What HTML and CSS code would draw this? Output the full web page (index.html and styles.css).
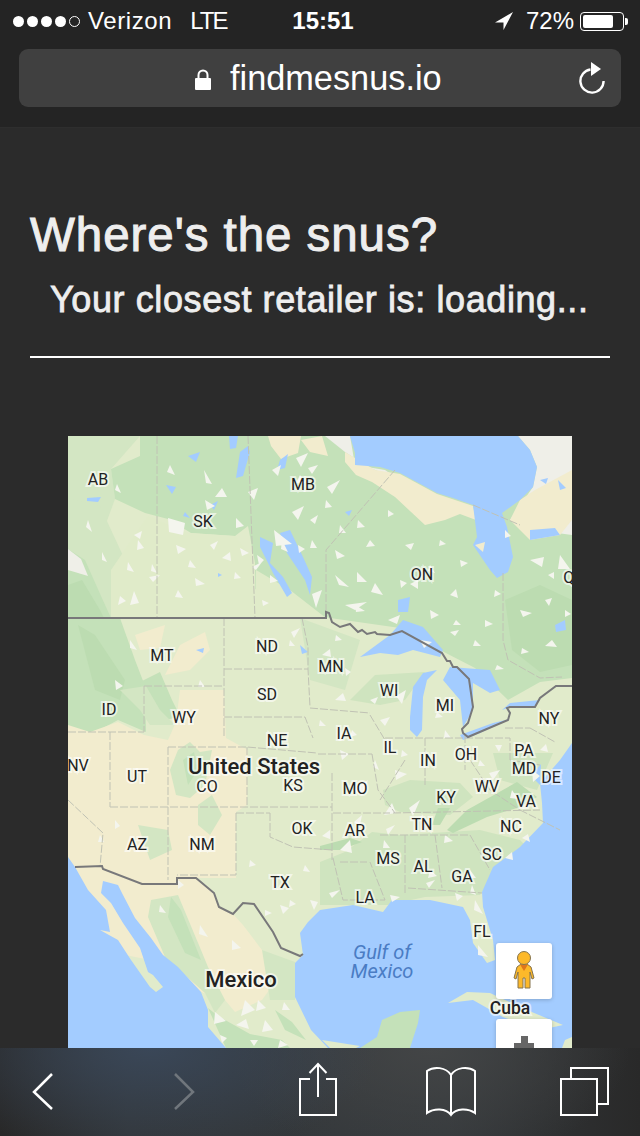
FILE: index.html
```html
<!DOCTYPE html>
<html lang="en">
<head>
  <meta charset="UTF-8">
  <meta name="viewport" content="width=device-width, initial-scale=1.0">
  <title>Where's the snus?</title>
  <link rel="stylesheet" href="styles.css">
</head>
<body>
  <!-- Safari chrome, top -->
  <header class="browser-top">
    <div class="status-bar">
      <div class="status-left">
        <span class="signal">
          <i class="dot"></i><i class="dot"></i><i class="dot"></i><i class="dot"></i><i class="dot empty"></i>
        </span>
        <span class="carrier">Verizon</span>
        <span class="network">LTE</span>
      </div>
      <div class="clock">15:51</div>
      <div class="status-right">
        <svg class="location" viewBox="0 0 18 18"><path d="M18 0L0 10.5h8.5V18z"/></svg>
        <span class="percent">72%</span>
        <span class="battery"><span class="battery-fill"></span></span>
        <span class="battery-nub"></span>
      </div>
    </div>
    <div class="url-bar">
      <svg class="lock" viewBox="0 0 16 21"><path d="M3.5 10V6a4.5 4.5 0 0 1 9 0v4" fill="none" stroke="#fff" stroke-width="2"/><rect y="9" width="16" height="12" rx="1" fill="#fff"/></svg>
      <span class="url-text">findmesnus.io</span>
      <svg class="reload" viewBox="0 0 28 32"><path d="M12.5 7.500A11.600 11.600 0 1 0 25.600 19" fill="none" stroke="#fff" stroke-width="2.400"/><path d="M13 0l10 7L13 14z" fill="#fff"/></svg>
    </div>
  </header>

  <main class="page">
    <h2 class="title">Where's the snus?</h2>
    <h3 class="subtitle">Your closest retailer is: loading...</h3>
    <hr class="rule">

    <div class="map">
      <svg class="map-canvas" viewBox="68 436 504 612">
        <!-- land -->
        <rect class="land" x="68" y="436" width="504" height="612"/>
        <path class="soft" d="M68 436H140L111 469L115 499L100 540L68 549z"/>
        <path class="forest" d="M140 436H572V678L540 682L508 700L475 668L440 650L400 628L330 618L311 613L255 589L255 563L248 526L235 536L191 533L168 519L145 513L115 499L111 469L140 456z"/>
        <path class="soft" d="M68 498L100 506L125 560L112 576L118 618H68z"/>
        <path class="prairie" d="M111 570L148 516L188 533L235 536L255 563L256 618H111z"/>
        <path class="prairie" d="M256 570L290 590L326 618H256z"/>
        <path class="forest" d="M68 549L85 560L101 596L111 618H68z"/>
        <path class="pine" d="M68 585L82 580L100 610L104 618H68z"/>
        <path class="rock" d="M68 549L81 559L88 576L68 570z"/>
        <path class="pine" d="M505 600L540 585L572 600V665L540 672L512 650z"/>
        <path class="rock" d="M325 436H350L355 465L385 470L400 480L370 468L345 452z"/>
        <path class="rock" d="M518 436H572V535L535 530L510 520L533 487L537 467L530 450z"/>
        <path class="sand" d="M345 452L375 470L400 474L437 494L473 506L476 520L460 514L445 520L425 525L395 497L372 482L356 475L345 462z"/>
        <path class="sand" d="M268 436H301L298 453L281 459L271 446zM301 440L322 436L328 456L310 452z"/>
        <path class="sand" d="M520 500L535 490L572 470V520L560 535L530 540L510 520z"/>

        <!-- western US -->
        <path class="forest" d="M68 618H120L135 660L145 686L146 732L118 720L90 735L68 732z"/>
        <path class="pine" d="M78 625L95 635L125 680L120 700L95 690z"/>
        <path class="forest" d="M140 682L160 672L172 700L180 716L160 722L145 712z"/>
        <path class="sand" d="M135 635L165 625L160 648L140 650zM180 645L205 632L210 650L190 670L165 675z"/>
        <path class="sand" d="M68 725L90 732L118 722L144 735L168 740L176 722L180 690L224 690L226 738L248 750L247 805L236 812L236 878H196L177 884L142 884L103 868H68z"/>
        <path class="soft" d="M178 750L190 742L200 752L212 750L205 785L190 798L176 795L170 770z"/>
        <path class="forest" d="M183 760L194 752L198 770L188 785z"/>
        <path class="soft" d="M198 805L212 795L222 815L210 835L198 825z"/>
        <path class="soft" d="M120 690L146 686L160 710L175 725L150 725L140 710z"/>
        <path class="soft" d="M138 825L168 830L172 850L150 860z"/>

        <!-- Mexico -->
        <path class="sand" d="M68 860L102 866L142 884L196 878L214 893L219 907L233 914L243 925L262 950L280 975L262 1000L235 1012L225 1000L201 992L150 960L100 950z"/>
        <path class="soft" d="M151 900L178 895L201 950L208 967L225 1000L215 1013L205 993L165 957L148 917z"/>
        <path class="forest" d="M171 897L181 910L201 960L185 953L168 917z"/>
        <path class="forest" d="M208 1008L218 1016L250 1034L282 1040L290 1048H226z"/>
        <path class="forest" d="M275 1010L292 1022L306 1040L285 1030z"/>
        <path class="soft" d="M262 950L295 962L295 1000L270 1000z"/>

        <!-- southeast -->
        <path class="meadow" d="M320 862L345 852L372 832L400 835L480 830L520 840L530 850L490 880L480 895L425 897L388 905H320z"/>
        <path class="meadow" d="M383 790L410 780L460 783L473 797L450 815L400 812L385 805zM493 753L553 753L537 790L500 780z"/>
        <path class="pine" d="M467 810L517 782L537 797L520 807L487 817L453 833L447 830zM320 846L350 838L362 842L340 850L320 850zM438 808L450 808L440 825L432 825z"/>
        <path class="meadow" d="M350 700L375 675L425 672L405 700L380 705z"/>
        <path class="soft" d="M300 618L360 640L345 690L310 680z"/>

        <!-- water -->
        <path class="water" d="M350 436H518L530 450L537 467L533 487L520 500L502 513L507 527L513 557L508 572L497 578L490 570L473 545L477 537L473 505L453 498L437 493L400 473L380 467L355 465L355 453z"/>
        <path class="sand" d="M475 545L485 542L483 552z"/>
        <path class="water" d="M68 857L75 867L88 890L106 910L110 932L100 930L118 940L131 960L150 987L156 992L163 987L153 975L148 972L140 948L123 923L111 903L101 893L103 881L118 885L123 895L135 918L151 938L163 955L178 967L201 992L208 1010L208 1027L226 1048H68z"/>
        <path class="water" d="M328 1048L311 1030L295 997L295 963L303 955L300 933L308 922L320 910L353 905L383 912L392 900L430 900L463 907L470 920L473 943L487 963L495 960L493 940L483 907L482 892L493 867L520 847L543 823L542 803L540 783L560 760L572 743V1048z"/>
        <path class="water" d="M536 770L541 764L540 785L535 780z"/>
        <path class="water" d="M360 657L390 635L403 620L423 627L443 650L440 657L413 650L398 655L380 653z"/>
        <path class="water" d="M410 717L413 687L423 673L437 670L427 680L423 697L422 730L417 737L410 730z"/>
        <path class="water" d="M450 667L490 670L500 690L490 693L473 683L473 710L463 727L460 700L443 680z"/>
        <path class="water" d="M460 735L493 723L510 719L480 733L463 740z"/>
        <path class="water" d="M502 710L510 703L540 700L535 707L508 708z"/>
        <path class="water" d="M280 533L290 530L303 557L312 577L310 595L305 580L287 553z"/>
        <path class="water" d="M260 537L273 543L270 563L283 577L292 593L287 597L273 573L260 547z"/>
        <path class="water" d="M229 436H238L236 448L230 449zM240 452L248 446L250 452L243 476L236 478L238 465zM188 456L200 452L196 462zM166 485L176 487L172 494zM87 498L101 497L98 502L87 501zM210 505L218 501L214 510zM185 512L190 518L183 516zM398 600L410 597L408 612L398 612zM540 480L548 478L546 484zM558 480L566 488L560 490zM530 530L555 528L560 535L530 540zM555 625L565 620L566 630L556 632zM280 460L288 454L285 468L277 470zM345 512L352 510L349 516zM300 645L308 652L302 654zM196 650L204 648L203 653zM218 573L222 575L218 577z"/>
        <path class="yucatan" d="M420 1010L400 1012L382 1020L377 1037L360 1048H410L418 1023z"/>
        <path class="land" d="M448 1003L467 992L490 993L527 1010L563 1025L540 1030L503 1017L473 1000zM565 1040L572 1037V1048H562z"/>
        <path class="land" d="M322 1040L360 1046L356 1048H330z"/>

        <!-- white specks in the vector tiles -->
        <path class="speck" d="M170 465l5 10l-8-3zM204 470l8 14l-6-1zM222 488l-7 9l12 0zM248 492l10-4l-4 12zM272 470l9-5l-3 11zM296 458l12-5l-7 14zM300 475l5 8l-9 0zM318 465l-6 9l-4-6zM340 480l-8 14l-5-7zM292 512l12-6l-6 14zM274 530l18 14l-16 2zM236 518l8 8l-8 2zM205 500l10 6l-8 4zM168 518l17 5l-2 12l-14-3zM134 535l8-4l-2 8zM88 520l4 12l-6-5zM117 484l4 9l-6-3zM210 545l8-4l-4 9zM240 548l9 5l-7 3zM190 560l6 8l-8-1zM262 562l-6 8l-4-3zM178 590l5 8l-8-1zM130 605l4-14l5 12zM257 555l7 5l-5 5zM282 540l6 12l-7-3zM312 540l5 8l-7 0zM335 550l10 6l-8 3zM370 540l5 6l-9 1zM405 545l9-2l-3 7zM418 580l-8 4l8 5zM335 575l14 12l-10-2zM357 572l10 10l-10 0zM375 583l8 12l-12-3zM345 605l22-3l-12 8zM322 590l-6 18l-4-14zM430 610l9 5l-8 4zM456 620l5 5l-8 0zM475 640l6 6l-8 0zM497 665l7 4l-9 1zM388 620l12-5l-3 9zM450 595l6-6l2 9zM530 560l14-3l-2 10zM560 555l10 14l-12 0zM545 600l7-2l-3 8zM520 610l12 3l-9 4zM552 640l-7 6l12 1zM495 590l6 4l-7 3zM160 575l-7 7l-4-5zM300 628l-6 10l-3-6zM200 680l5 7l-7 0zM130 640l7 10l-7-2zM115 680l8 6l-7 4zM335 700l8-7l3 8zM420 640l12 2l-8 6zM406 690l-4 14l-6-8zM437 712l6 5l-8 1zM380 720l10-3l-5 9zM340 750l9 4l-7 6zM395 770l12 4l-11 6zM368 780l-6 16l-8-6zM420 800l-7 16l-4-8zM384 815l8-12l4 10zM350 840l-10 10l12 3zM430 870l7 6l-9 2zM470 870l6 8l-8 0zM310 900l8 2l-4 8zM280 905l9 3l-6 6zM475 900l8 14l-9-4zM478 945l10 12l-10-2zM512 790l6 9l-8-1zM532 770l8 6l-7 6zM500 770l-7 10l-4-7zM200 925l8 12l-9-3zM232 940l9 8l-9 2zM262 975l8 5l-9 4zM245 1000l10 10l-14 6zM215 1012l11 9l-12 3zM265 1020l8 10l-11 2zM280 1040l8 5l-10 3zM236 1025l10 -6l3 10zM258 1000l8 8l-10 3zM284 1002l6 8l-8 0zM220 1035l7 3l-5 5zM250 1040l8 0l-4 6zM138 540l6 8l-7 2zM128 562l6 10l-7-2zM152 564l5 9l-6-2zM176 545l10 4l-8 5zM222 558l8-6l1 9zM195 578l10 6l-9 2zM120 596l6 5l-8 4zM235 572l6 6l-7 1zM262 600l7 3l-6 3zM270 575l8 6l-8 2zM102 552l5 10l-5-2zM298 545l7 4l-6 4zM310 520l8-5l-3 9zM326 500l6 7l-7 1zM358 520l7 7l-8 1zM388 510l6 4l-6 3zM440 540l6 4l-7 2zM460 560l8 3l-7 4zM430 565l5 8l-7-2zM400 580l7 3l-6 5zM340 525l6 8l-7 0zM355 605l10 6l-9 1zM485 620l8 4l-8 3zM522 648l7 4l-8 2zM548 575l6-3l0 7zM565 610l6 4l-6 3zM505 530l6 6l-6 2zM450 632l9-2l-4 6zM336 635l6 5l-7 1zM322 655l8-6l1 8zM290 640l5 6l-6 0zM345 668l6 4l-5 4zM370 700l8-3l-3 7zM320 720l6 6l-7 0zM300 760l7 4l-6 3zM352 730l5 5l-7 2zM375 760l4 10l-6-3zM402 750l6 5l-7 2zM445 730l6 8l-7 0zM480 760l5 6l-7 0zM495 745l7 0l-3 7zM540 750l6-6l2 8zM330 830l-8 6l8 3zM362 815l-2 10l-6-3zM384 840l6 8l-7 0zM395 825l-7 10l-2-6zM445 835l8 6l-9 2zM505 858l7-6l1 8zM522 838l6-4l2 8zM435 880l-6 8l-3-5zM455 893l8 3l-6 5zM390 895l10 2l-8 5zM472 885l4 10l-6-2zM340 890l-8 8l-3-5zM250 860l6 5l-7 2zM265 910l7 3l-7 3zM305 865l5 7l-7-1zM290 900l6 4l-7 3zM160 905l6 8l-7-1zM178 880l6 5l-6 4zM100 835l4 7l-6 0zM115 820l5 6l-5 3z"/>

        <!-- borders -->
        <path class="province" d="M157 436V618M248 436L255 618M326 612V550L395 470M503 573V640L508 660L540 678L562 677M473 505L520 525"/>
        <path class="state" d="M224 618V738M224 669H308M302 618L308 647V669L310 707M224 717H305L313 738M144 686H224M144 686V732M68 732H144M110 732V807M110 807H332M168 747H247L317 753M168 747V880M236 813V875H177M247 747V807M332 773V860M270 813V837L293 847L332 850M236 813H270M333 813H390M340 862H367M405 835V893M380 835H470M393 813L540 810M435 835L442 888M408 888L482 893M310 708L370 713M318 754H372M68 800L103 833L100 867M372 754L378 790L395 813M425 738V785M465 735V770M385 738H510V760L540 765M470 760L490 790L520 810M370 715L385 740M333 858L343 900L385 900L370 862M405 760L380 800M505 728L530 728M530 728L555 742M470 835L490 870M520 810L560 830"/>
        <path class="border" d="M68 618H326V612L329 613L332 622L340 627L350 624L358 632L362 630L367 634L375 632L377 634L390 635L402 631L442 653L447 661L450 661L453 667L457 667L469 679L473 707L468 723L462 729L463 733L468 737L508 720L510 713L507 708L510 707H535L540 698L556 686H572"/>
        <path class="border" d="M75 867L102 866L103 869L142 884H177V878H196L214 893L219 907L233 914L243 903L254 904L273 932L281 948L300 956L303 954"/>

        <!-- labels -->
        <text class="state-label" x="98" y="485">AB</text>
        <text class="state-label" x="303" y="490">MB</text>
        <text class="state-label" x="203" y="527">SK</text>
        <text class="state-label" x="422" y="580">ON</text>
        <text class="state-label" x="574" y="583">QC</text>
        <text class="state-label" x="267" y="652">ND</text>
        <text class="state-label" x="162" y="661">MT</text>
        <text class="state-label" x="331" y="672">MN</text>
        <text class="state-label" x="267" y="700">SD</text>
        <text class="state-label" x="389" y="696">WI</text>
        <text class="state-label" x="445" y="711">MI</text>
        <text class="state-label" x="184" y="723">WY</text>
        <text class="state-label" x="109" y="715">ID</text>
        <text class="state-label" x="549" y="724">NY</text>
        <text class="state-label" x="344" y="739">IA</text>
        <text class="state-label" x="277" y="746">NE</text>
        <text class="state-label" x="390" y="753">IL</text>
        <text class="state-label" x="524" y="756">PA</text>
        <text class="state-label" x="428" y="766">IN</text>
        <text class="state-label" x="466" y="760">OH</text>
        <text class="state-label" x="524" y="774">MD</text>
        <text class="state-label" x="551" y="783">DE</text>
        <text class="state-label" x="78" y="771">NV</text>
        <text class="state-label" x="137" y="782">UT</text>
        <text class="state-label" x="207" y="792">CO</text>
        <text class="state-label" x="293" y="791">KS</text>
        <text class="state-label" x="355" y="794">MO</text>
        <text class="state-label" x="487" y="792">WV</text>
        <text class="state-label" x="446" y="803">KY</text>
        <text class="state-label" x="526" y="807">VA</text>
        <text class="state-label" x="302" y="834">OK</text>
        <text class="state-label" x="355" y="836">AR</text>
        <text class="state-label" x="422" y="830">TN</text>
        <text class="state-label" x="511" y="832">NC</text>
        <text class="state-label" x="137" y="850">AZ</text>
        <text class="state-label" x="202" y="850">NM</text>
        <text class="state-label" x="388" y="864">MS</text>
        <text class="state-label" x="423" y="872">AL</text>
        <text class="state-label" x="492" y="860">SC</text>
        <text class="state-label" x="462" y="882">GA</text>
        <text class="state-label" x="280" y="888">TX</text>
        <text class="state-label" x="365" y="903">LA</text>
        <text class="state-label" x="482" y="937">FL</text>
        <text class="country-label" x="254" y="774">United States</text>
        <text class="country-label" x="241" y="987">Mexico</text>
        <text class="cuba-label" x="510" y="1014">Cuba</text>
        <text class="sea-label" x="382" y="959">Gulf of</text>
        <text class="sea-label" x="382" y="978">Mexico</text>
      </svg>

      <div class="map-btn pegman-btn">
        <svg class="pegman" viewBox="0 0 22 38">
          <path d="M8 13L4 16L1 27L3 28L5 21V37H10V27H12V37H17V21L19 28L21 27L18 16L14 13z" fill="#fdb92a" stroke="#85744f"/>
          <path d="M7 13.500H15L11 20z" fill="#e0761c"/>
          <circle cx="11" cy="7" r="6.500" fill="#fdb92a" stroke="#85744f"/>
        </svg>
      </div>
      <div class="map-btn zoom-btn"><span class="plus"></span></div>
    </div>
  </main>

  <!-- Safari chrome, bottom -->
  <footer class="toolbar">
    <svg class="tool-icon" viewBox="0 0 64 88"><path class="chevron" d="M28 10L10 28L28 45"/></svg>
    <svg class="tool-icon" viewBox="0 0 64 88"><path class="chevron off" d="M19 10L37 28L19 45"/></svg>
    <svg class="tool-icon" viewBox="0 0 64 88"><path d="M22 15H12V51H48V15H38M30 33V0M21.500 9L30 0L38.500 9"/></svg>
    <svg class="tool-icon" viewBox="0 0 64 88"><path d="M31 11C26 3 14 2 7 7V49C14 44 26 44 31 51C36 44 48 44 55 49V7C48 2 36 3 31 11zM31 11V51"/></svg>
    <svg class="tool-icon" viewBox="0 0 64 88"><path d="M19 15V4H56V40H45M9 15H45V51H9z"/></svg>
  </footer>
</body>
</html>
```

FILE: styles.css
```css
* {
  box-sizing: border-box;
}

body {
  margin: 0;
  height: 1136px;
  overflow: hidden;
  display: flex;
  flex-direction: column;
  background-color: #2b2b2b;
  font-family: "Liberation Sans", Arial, sans-serif;
  color: #fff;
}

/* Top browser bar */
.browser-top {
  height: 128px;
  flex: none;
  background-color: #242424;
  border-bottom: 1px solid #2e2e2e;
}

.status-bar {
  height: 40px;
  padding: 2px 12px 0 18px;
  display: grid;
  grid-template-columns: 1fr auto 1fr;
  align-items: center;
  font-size: 24px;
}

.status-left,
.status-right {
  display: flex;
  align-items: center;
}

.status-right {
  justify-content: flex-end;
}

.signal {
  display: flex;
  gap: 3px;
  margin-right: 8px;
  margin-left: -5px;
}

.dot {
  width: 11px;
  height: 11px;
  border-radius: 50%;
  background-color: #fff;
}

.dot.empty {
  background: none;
  border: 1px solid #fff;
}

.carrier {
  margin-right: 18px;
  letter-spacing: 0.6px;
}

.network {
  letter-spacing: -2px;
}

.clock {
  font-weight: bold;
}

.location {
  width: 18px;
  height: 18px;
  fill: #fff;
  margin-right: 13px;
}

.percent {
  margin-right: 6px;
}

.battery {
  width: 44px;
  height: 19px;
  border: 1px solid #fff;
  border-radius: 4px;
  padding: 2px;
  display: block;
}

.battery-fill {
  display: block;
  width: 30px;
  height: 100%;
  background-color: #fff;
  border-radius: 2px;
}

.battery-nub {
  width: 3px;
  height: 7px;
  background-color: #fff;
  border-radius: 0 2px 2px 0;
  margin-left: 1px;
}

.url-bar {
  margin: 9px 19px 0;
  height: 58px;
  padding: 0 15px 0 176px;
  border-radius: 9px;
  background-color: #404040;
  display: flex;
  align-items: center;
}

.lock {
  width: 16px;
  height: 21px;
  margin-right: 19px;
  margin-top: 2px;
}

.url-text {
  font-size: 34.300px;
  flex: 1;
}

.reload {
  width: 28px;
  height: 32px;
}

/* Page */
.page {
  flex: 1;
  min-height: 0;
  padding: 0 30px;
  display: flex;
  flex-direction: column;
}

.title {
  margin: 80px 0 0;
  font-size: 47.500px;
  line-height: 54px;
  font-weight: normal;
  letter-spacing: 0.950px;
  -webkit-text-stroke: 1px #eeeeee;
  color: #eeeeee;
}

.subtitle {
  margin: 17px 0 0;
  padding-left: 20px;
  font-size: 36px;
  line-height: 42px;
  font-weight: normal;
  letter-spacing: 0.600px;
  -webkit-text-stroke: 0.800px #eeeeee;
  color: #eeeeee;
}

.rule {
  width: 100%;
  margin: 35px 0 0;
  border: none;
  border-top: 2px solid #ffffff;
}

.map {
  position: relative;
  flex: none;
  width: 504px;
  height: 612px;
  margin: 78px 0 0 38px;
  overflow: hidden;
}

.map-canvas {
  display: block;
  width: 504px;
  height: 612px;
}

.land { fill: #e1ebcb; }
.soft { fill: #d3e6c3; }
.forest { fill: #c4e1b9; }
.pine { fill: #bcdcb1; }
.prairie { fill: #e0ebc9; }
.rock { fill: #efefe8; }
.sand { fill: #f2ecce; }
.meadow { fill: #cfe4bf; }
.water { fill: #a3ccff; }
.yucatan { fill: #c4e1b9; }
.speck { fill: #f4f5ee; }

.province,
.state {
  fill: none;
  stroke: #c0c2b4;
  stroke-width: 1;
  stroke-dasharray: 8 2;
}

.border {
  fill: none;
  stroke: #78787a;
  stroke-width: 2;
}

.state-label,
.country-label,
.cuba-label {
  font-family: Roboto, sans-serif;
  text-anchor: middle;
  fill: #222222;
  paint-order: stroke;
  stroke: rgba(255, 255, 255, 0.6);
  stroke-width: 4px;
}

.state-label {
  font-size: 16px;
}

.country-label {
  font-size: 22px;
  font-weight: 500;
}

.cuba-label {
  font-size: 17.500px;
  font-weight: 500;
}

.sea-label {
  font-family: Roboto, sans-serif;
  font-size: 20px;
  font-style: italic;
  text-anchor: middle;
  fill: #4a7cc4;
}

.map-btn {
  position: absolute;
  left: 428px;
  width: 56px;
  background-color: #fff;
  border-radius: 3px;
  box-shadow: 0 1px 4px rgba(0, 0, 0, 0.2);
  display: flex;
  justify-content: center;
}

.pegman-btn {
  top: 507px;
  height: 56px;
  align-items: center;
  padding-bottom: 3px;
}

.pegman {
  width: 22px;
  height: 38px;
}

.zoom-btn {
  top: 583px;
  height: 56px;
}

.plus {
  display: block;
  width: 20px;
  height: 20px;
  margin-top: 17px;
  background:
    linear-gradient(#666, #666) center / 7px 20px no-repeat,
    linear-gradient(#666, #666) center / 20px 6px no-repeat;
}

/* Bottom browser bar */
.toolbar {
  position: absolute;
  left: 0;
  right: 0;
  top: 1048px;
  height: 88px;
  padding: 0 24px;
  display: flex;
  justify-content: space-between;
  background:
    radial-gradient(ellipse 230px 110px at 150px 0, #3a4758 0%, rgba(58, 71, 88, 0) 100%),
    radial-gradient(ellipse 200px 120px at 430px 0, #434546 0%, rgba(67, 69, 70, 0) 100%),
    linear-gradient(90deg, #282828, #323639 20%, #35393c 70%, #292929);
}

.tool-icon {
  width: 64px;
  height: 88px;
  margin-top: 16px;
  overflow: visible;
}

.tool-icon path {
  fill: none;
  stroke: #fff;
  stroke-width: 2;
}

.tool-icon .chevron {
  stroke-width: 2.500;
}

.tool-icon .off {
  stroke: #70767c;
}
```
